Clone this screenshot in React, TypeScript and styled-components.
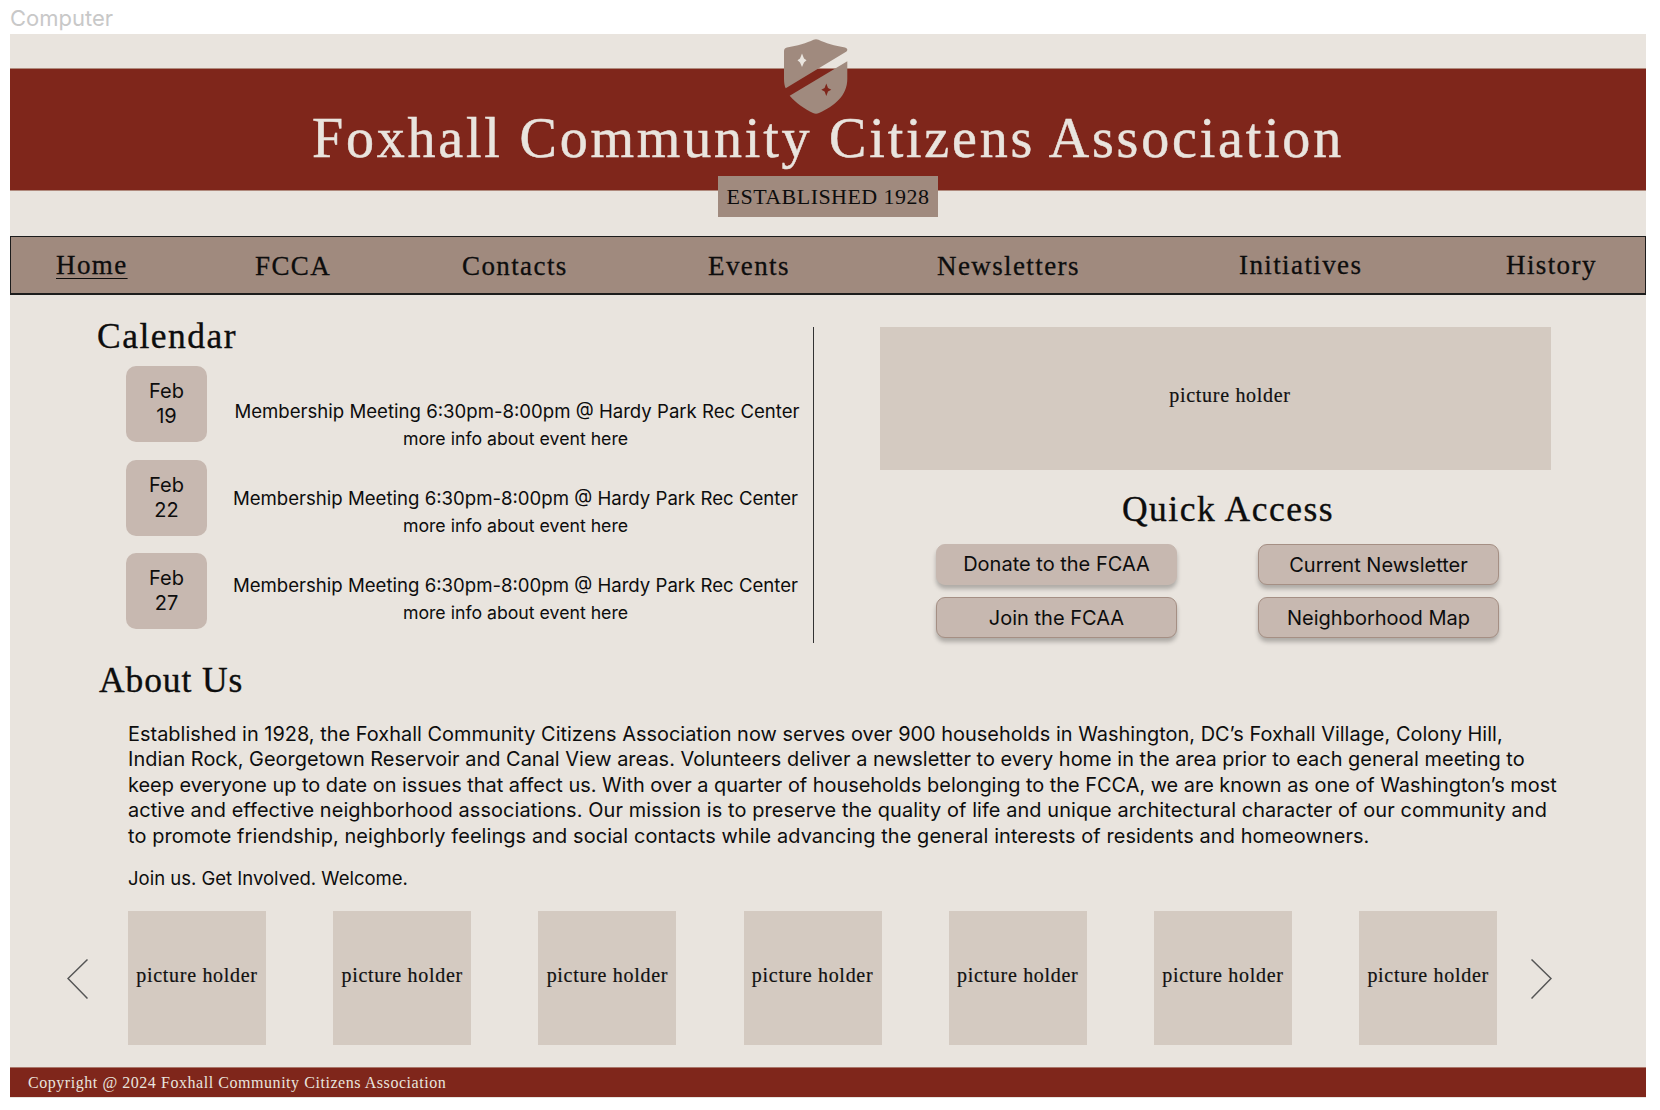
import { FC } from 'react';
import styled, { createGlobalStyle } from 'styled-components';

const serif = `"Liberation Serif", "Times New Roman", serif`;
const sans = `Inter, "Noto Sans", sans-serif`;

const GlobalStyle = createGlobalStyle`
  html, body {
    margin: 0;
    padding: 0;
    background: #fff;
  }
  body {
    height: 1110px;
    overflow: hidden;
  }
`;

const FrameLabel = styled.div`
  height: 34px;
  padding-left: 10px;
  box-sizing: border-box;
  font-family: ${sans};
  font-size: 22px;
  line-height: 36px;
  color: #c8c8c8;
`;

const Frame = styled.div`
  width: 1636px;
  height: 1064px;
  margin-left: 10px;
  background: #e9e4de;
  display: flex;
  flex-direction: column;
  color: #0d0d0d;
  overflow: hidden;
`;

const Header = styled.header`
  position: relative;
  display: flex;
  flex-direction: column;
  align-items: center;
  padding-top: 34px;
`;

const Band = styled.div`
  width: 100%;
  height: 123px;
  box-sizing: border-box;
  background: #7f261b;
  border-top: 1px solid #b08a7d;
  border-bottom: 1px solid #b08a7d;
  display: flex;
  justify-content: center;
  padding-top: 38px;
`;

const Title = styled.h1`
  margin: 0;
  font-family: ${serif};
  font-weight: 400;
  font-size: 56px;
  line-height: 62px;
  letter-spacing: 2.8px;
  -webkit-text-stroke: 0.5px #e9e4de;
  color: #e9e4de;
  white-space: nowrap;
`;

const Crest = styled.svg`
  position: absolute;
  left: 774px;
  top: 5px;
  width: 64px;
  height: 75px;
`;

const Badge = styled.div`
  width: 220px;
  height: 41px;
  margin-top: -15px;
  background: #a08a7e;
  display: flex;
  align-items: center;
  justify-content: center;
  font-family: ${serif};
  font-size: 22px;
  letter-spacing: 0.45px;
  z-index: 1;
`;

const Nav = styled.nav`
  margin-top: 19px;
  height: 59px;
  box-sizing: border-box;
  background: #a08a7e;
  border: 1px solid #1c1c1c;
  border-bottom-width: 2px;
  padding-left: 45px;
  display: grid;
  grid-template-columns: 199px 207px 246px 229px 302px 267px auto;
  align-items: center;
`;

const NavItem = styled.a<{ $active?: boolean; $low?: boolean }>`
  font-family: ${serif};
  font-size: 27px;
  letter-spacing: 1.4px;
  -webkit-text-stroke: 0.3px #0d0d0d;
  margin-top: ${(p) => (p.$low ? 3 : 1)}px;
  text-decoration: ${(p) => (p.$active ? 'underline' : 'none')};
  text-underline-offset: 4px;
  text-decoration-thickness: 1px;
`;

const Main = styled.main`
  display: flex;
  padding-top: 32px;
  height: 317px;
  box-sizing: content-box;
`;

const CalendarColumn = styled.section`
  width: 804px;
  height: 316px;
  box-sizing: border-box;
  border-right: 1.5px solid #333;
  padding-left: 87px;
`;

const SectionHeading = styled.h2<{ $center?: boolean }>`
  margin: 0;
  font-family: ${serif};
  font-weight: 400;
  font-size: 35.5px;
  line-height: 40px;
  letter-spacing: 1.5px;
  -webkit-text-stroke: 0.35px #0d0d0d;
  text-align: ${(p) => (p.$center ? 'center' : 'left')};
`;

const CalendarHeading = styled(SectionHeading)`
  margin-top: -11px;
`;

const AboutHeading = styled(SectionHeading)`
  letter-spacing: 0.9px;
`;

const CalendarBody = styled.div`
  display: flex;
  margin-top: 10px;
  padding-left: 29px;
`;

const DateColumn = styled.div`
  display: flex;
  flex-direction: column;
  gap: 17.5px;
`;

const DateBox = styled.div`
  width: 81px;
  height: 76px;
  background: #c7b8b0;
  border-radius: 10px;
  display: flex;
  align-items: center;
  justify-content: center;
  text-align: center;
  font-family: ${sans};
  font-size: 20px;
  line-height: 25px;
`;

const EventColumn = styled.div`
  flex: 1;
  margin-left: 11px;
  padding-top: 32px;
  display: flex;
  flex-direction: column;
`;

const EventItem = styled.div`
  height: 87px;
  text-align: center;
  font-family: ${sans};
  font-size: 17.7px;
  line-height: 25px;
  white-space: nowrap;
`;

const EventTitle = styled.div<{ $pad: number }>`
  padding-left: ${(p) => p.$pad}px;
  font-size: 18.6px;
  line-height: 27.5px;
`;

const SideColumn = styled.section`
  flex: 1;
  padding-left: 66px;
`;

const Hero = styled.div`
  width: 671px;
  height: 143px;
  background: #d4cac1;
  display: flex;
  justify-content: center;
  padding-left: 29px;
  box-sizing: border-box;
  padding-top: 56px;
`;

const HolderText = styled.span`
  font-family: ${serif};
  font-size: 20px;
  line-height: 24px;
  letter-spacing: 0.7px;
  -webkit-text-stroke: 0.2px #111;
  color: #111;
  white-space: nowrap;
`;

const QuickHeading = styled(SectionHeading)`
  width: 696px;
  margin-top: 19px;
`;

const QuickGrid = styled.div`
  margin-top: 15px;
  margin-left: 56px;
  display: grid;
  grid-template-columns: 241px 241px;
  column-gap: 81px;
  row-gap: 12px;
`;

const QuickButton = styled.button<{ $plain?: boolean }>`
  height: 41px;
  background: #c7b8b0;
  border: 1px solid ${(p) => (p.$plain ? '#c7b8b0' : '#a58f84')};
  border-radius: 9px;
  box-shadow: 0 4px 4px rgba(0, 0, 0, 0.25);
  font-family: ${sans};
  font-size: 20px;
  color: #0d0d0d;
  padding: 0 0 ${(p) => (p.$plain ? 2 : 0)}px;
`;

const About = styled.section`
  margin-top: 16px;
  padding-left: 89px;
`;

const AboutBody = styled.div`
  margin-top: 22px;
  padding-left: 29px;
  font-family: ${sans};
  font-size: 19.9px;
  line-height: 25.4px;
  white-space: nowrap;
`;

const Paragraph = styled.p`
  margin: 0 0 17px;
`;

const ParagraphLine = styled.span<{ $track: number }>`
  display: block;
  letter-spacing: ${(p) => p.$track}px;
`;

const ClosingLine = styled.p`
  margin: 0 0 20px;
  font-size: 18.5px;
`;

const Gallery = styled.div`
  padding-left: 57px;
  display: flex;
  align-items: flex-start;
`;

const ArrowSlot = styled.div<{ $side: 'left' | 'right' }>`
  width: 21px;
  height: 134px;
  margin-left: ${(p) => (p.$side === 'left' ? 0 : 34)}px;
  margin-right: ${(p) => (p.$side === 'left' ? 40 : 0)}px;
  display: flex;
  align-items: flex-start;
  padding-top: 48px;
  box-sizing: border-box;
`;

const Tiles = styled.div`
  display: flex;
  gap: 67.2px;
`;

const Tile = styled.div`
  width: 138px;
  height: 134px;
  background: #d4cac1;
  display: flex;
  justify-content: center;
  padding-top: 52px;
  box-sizing: border-box;
`;

const Footer = styled.footer`
  margin-top: 22px;
  height: 30px;
  background: #7f261b;
  border-top: 1px solid #a9766a;
  box-sizing: border-box;
  padding-left: 18px;
  font-family: ${serif};
  font-size: 16px;
  line-height: 30px;
  letter-spacing: 0.55px;
  color: #e9e4de;
`;

const navItems = [
  { label: 'Home', low: false },
  { label: 'FCCA', low: true },
  { label: 'Contacts', low: true },
  { label: 'Events', low: true },
  { label: 'Newsletters', low: true },
  { label: 'Initiatives', low: false },
  { label: 'History', low: false },
];

const events = [
  { month: 'Feb', day: '19', pad: 3 },
  { month: 'Feb', day: '22', pad: 0 },
  { month: 'Feb', day: '27', pad: 0 },
];

const quickLinks = ['Donate to the FCAA', 'Current Newsletter', 'Join the FCAA', 'Neighborhood Map'];

const aboutLines = [
  { text: 'Established in 1928, the Foxhall Community Citizens Association now serves over 900 households in Washington, DC’s Foxhall Village, Colony Hill,', track: 0.03 },
  { text: 'Indian Rock, Georgetown Reservoir and Canal View areas. Volunteers deliver a newsletter to every home in the area prior to each general meeting to', track: 0.035 },
  { text: 'keep everyone up to date on issues that affect us. With over a quarter of households belonging to the FCCA, we are known as one of Washington’s most', track: 0 },
  { text: 'active and effective neighborhood associations. Our mission is to preserve the quality of life and unique architectural character of our community and', track: 0.1 },
  { text: 'to promote friendship, neighborly feelings and social contacts while advancing the general interests of residents and homeowners.', track: 0.105 },
];

const Arrow: FC<{ side: 'left' | 'right' }> = ({ side }) => (
  <ArrowSlot $side={side}>
    <svg width="21" height="40" viewBox="0 0 21 40" fill="none">
      <path
        d={side === 'left' ? 'M20.5 0.5 L1 19.5 L20.5 39.5' : 'M0.5 0.5 L20 19.5 L0.5 39.5'}
        stroke="#555"
        strokeWidth="1.5"
      />
    </svg>
  </ArrowSlot>
);

const App: FC = () => {
  return (
    <>
      <GlobalStyle />
      <FrameLabel>Computer</FrameLabel>
      <Frame>
        <Header>
          <Band>
            <Title>Foxhall Community Citizens Association</Title>
          </Band>
          <Crest viewBox="0 0 64 75">
            <path
              d="M29.5 0.8 C31 0 33 0 34.5 0.8 C41 4 51 7 61 8.5 C63.5 9 64 11 62.5 12.5 L1.7 49.3 C0.6 47 0 44 0 40 L0 12 C0 10 1 9 3 8.5 C13 7 23 4 29.5 0.8 Z"
              fill="#a08a7e"
            />
            <path
              d="M63.3 22.3 L5.7 56.7 C12 64 21 70 29 74 C31 75 33 75 35 74 C50 67 63.3 57 63.3 40 Z"
              fill="#a08a7e"
            />
            <path d="M18 14.5 L20 19.5 L22.5 21.3 L20 23.5 L18 28 L16 23.5 L13.5 21.3 L16 19.5 Z" fill="#e9e4de" />
            <path d="M42.3 44.5 L44 49 L47.3 50.7 L44 52.5 L42.3 57 L40.6 52.5 L37.3 50.7 L40.6 49 Z" fill="#7f261b" />
          </Crest>
          <Badge>ESTABLISHED 1928</Badge>
        </Header>
        <Nav>
          {navItems.map((item, index) => (
            <NavItem key={item.label} $active={index === 0} $low={item.low}>
              {item.label}
            </NavItem>
          ))}
        </Nav>
        <Main>
          <CalendarColumn>
            <CalendarHeading>Calendar</CalendarHeading>
            <CalendarBody>
              <DateColumn>
                {events.map((event) => (
                  <DateBox key={event.day}>
                    {event.month}
                    <br />
                    {event.day}
                  </DateBox>
                ))}
              </DateColumn>
              <EventColumn>
                {events.map((event) => (
                  <EventItem key={event.day}>
                    <EventTitle $pad={event.pad}>Membership Meeting 6:30pm-8:00pm @ Hardy Park Rec Center</EventTitle>
                    <div>more info about event here</div>
                  </EventItem>
                ))}
              </EventColumn>
            </CalendarBody>
          </CalendarColumn>
          <SideColumn>
            <Hero>
              <HolderText>picture holder</HolderText>
            </Hero>
            <QuickHeading $center>Quick Access</QuickHeading>
            <QuickGrid>
              {quickLinks.map((link, index) => (
                <QuickButton key={link} $plain={index === 0}>
                  {link}
                </QuickButton>
              ))}
            </QuickGrid>
          </SideColumn>
        </Main>
        <About>
          <AboutHeading>About Us</AboutHeading>
          <AboutBody>
            <Paragraph>
              {aboutLines.map((line) => (
                <ParagraphLine key={line.text} $track={line.track}>
                  {line.text}
                </ParagraphLine>
              ))}
            </Paragraph>
            <ClosingLine>Join us. Get Involved. Welcome.</ClosingLine>
          </AboutBody>
        </About>
        <Gallery>
          <Arrow side="left" />
          <Tiles>
            {Array.from({ length: 7 }).map((_, index) => (
              <Tile key={index}>
                <HolderText>picture holder</HolderText>
              </Tile>
            ))}
          </Tiles>
          <Arrow side="right" />
        </Gallery>
        <Footer>Copyright @ 2024 Foxhall Community Citizens Association</Footer>
      </Frame>
    </>
  );
};

export default App;
